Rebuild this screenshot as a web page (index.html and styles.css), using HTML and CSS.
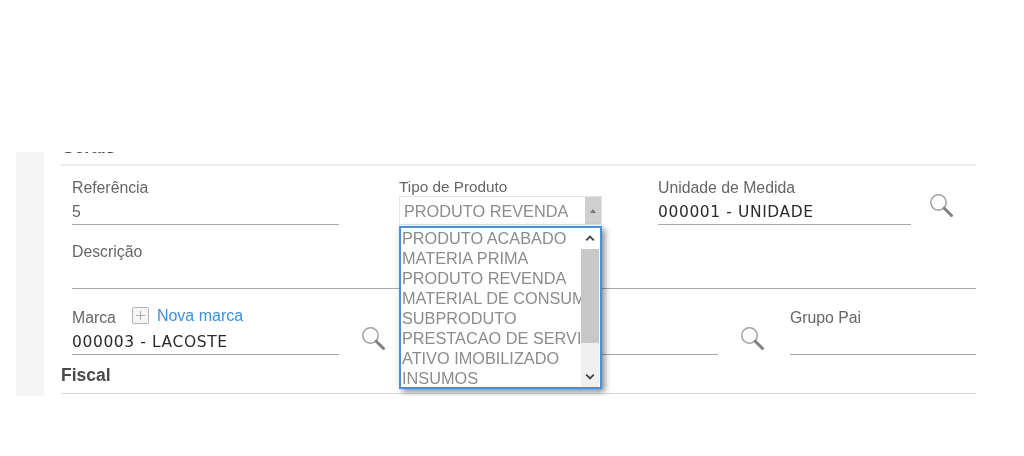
FILE: index.html
```html
<!DOCTYPE html>
<html lang="en">
<head>
    <meta charset="UTF-8">
    <meta name="viewport" content="width=device-width, initial-scale=1.0">
    <title>Cadastro de Produto</title>
    <link rel="stylesheet" href="styles.css">
</head>
<body>
    <svg class="icon-defs" width="0" height="0">
        <symbol id="icon-search" viewBox="0 0 24 24">
            <circle cx="9.5" cy="9.5" r="7.7" fill="none" stroke="#a0a0a0" stroke-width="1.5"/>
            <path d="M15.2 15.2 L22.5 22.5" fill="none" stroke="#808080" stroke-width="3" stroke-linecap="round"/>
        </symbol>
    </svg>

    <div class="panel">
        <div class="panel-strip"></div>
        <div class="panel-body">
            <h2 class="section-title section-general">Gerais</h2>

            <div class="form-row row-first">
                <div class="field field-ref">
                    <label>Referência</label>
                    <div class="field-value plain">5</div>
                </div>
                <div class="field field-type">
                    <label class="small-label">Tipo de Produto</label>
                    <div class="select-closed">
                        <span class="select-text">PRODUTO REVENDA</span>
                        <span class="select-arrow"><i></i></span>
                    </div>
                    <div class="select-list">
                        <ul>
                            <li>PRODUTO ACABADO</li>
                            <li>MATERIA PRIMA</li>
                            <li>PRODUTO REVENDA</li>
                            <li>MATERIAL DE CONSUMO</li>
                            <li>SUBPRODUTO</li>
                            <li>PRESTACAO DE SERVICO</li>
                            <li>ATIVO IMOBILIZADO</li>
                            <li>INSUMOS</li>
                        </ul>
                        <div class="scrollbar">
                            <svg class="scroll-btn" viewBox="0 0 18 22"><path d="M5 13 L9 9 L13 13" fill="none" stroke="#444" stroke-width="2"/></svg>
                            <div class="scroll-thumb"></div>
                            <svg class="scroll-btn scroll-btn-down" viewBox="0 0 18 22"><path d="M5 9 L9 13 L13 9" fill="none" stroke="#444" stroke-width="2"/></svg>
                        </div>
                    </div>
                </div>
                <div class="field field-unit">
                    <label>Unidade de Medida</label>
                    <div class="field-value code">000001 - UNIDADE</div>
                </div>
                <svg class="search-icon search-unit"><use href="#icon-search"/></svg>
            </div>

            <div class="form-row row-desc">
                <div class="field field-desc">
                    <label>Descrição</label>
                    <div class="field-value plain"></div>
                </div>
            </div>

            <div class="form-row row-brand">
                <div class="field field-ref">
                    <div class="brand-label">
                        <label>Marca</label>
                        <span class="plus-box"></span>
                        <a class="new-link">Nova marca</a>
                    </div>
                    <div class="field-value code">000003 - LACOSTE</div>
                </div>
                <svg class="search-icon search-brand"><use href="#icon-search"/></svg>
                <div class="field field-group">
                    <label></label>
                    <div class="field-value plain"></div>
                </div>
                <svg class="search-icon search-group"><use href="#icon-search"/></svg>
                <div class="field field-parent">
                    <label>Grupo Pai</label>
                    <div class="field-value plain"></div>
                </div>
            </div>

            <h2 class="section-title section-fiscal">Fiscal</h2>
        </div>
    </div>
</body>
</html>
```

FILE: styles.css
```css
:root {
    --label-color: #666;
    --line-color: #a8a8a8;
    --select-text: #8c8c8c;
    --select-blue: #4a90d9;
}

body {
    margin: 0;
    padding: 0;
    background: #fff;
    font-family: "Liberation Sans", Arial, sans-serif;
    color: var(--label-color);
}

.icon-defs {
    display: block;
}

.panel {
    display: flex;
    height: 244px;
    width: 960px;
    margin: 152px 0 0 16px;
    overflow: hidden;
    filter: blur(0.5px);
}

.panel-strip {
    width: 28px;
    flex-shrink: 0;
    background: #f5f5f5;
}

.panel-body {
    flex: 1;
    margin-left: 17px;
}

.section-title {
    margin: 0;
    font-size: 17.5px;
    font-weight: bold;
    color: #4a4a4a;
    border-bottom: 1px solid #e2e2e2;
}

.section-general {
    height: 27px;
    margin-top: -17px;
    padding-top: 2px;
    line-height: 20px;
    border-bottom-width: 2px;
    border-bottom-color: #ececec;
}

.section-fiscal {
    height: 29px;
    line-height: 22px;
    border-bottom-color: #d8d8d8;
}

.form-row {
    display: flex;
    align-items: flex-start;
    padding-left: 11px;
}

.row-first {
    height: 64px;
    padding-top: 12px;
}

.row-desc {
    height: 47px;
}

.row-brand {
    height: 56px;
    padding-top: 19px;
}

.field {
    position: relative;
    flex-shrink: 0;
}

.field label {
    display: block;
    height: 20px;
    line-height: 20px;
    font-size: 15.8px;
}

.field .small-label {
    font-size: 15.3px;
    line-height: 17px;
}

.field-value {
    height: 26px;
    line-height: 28px;
    border-bottom: 1px solid var(--line-color);
    color: #444;
}

.plain {
    font-size: 15.8px;
    color: #666;
}

.code {
    font-family: "DejaVu Sans", Verdana, sans-serif;
    font-size: 15.5px;
    letter-spacing: 0.6px;
    color: #2b2b2b;
    white-space: pre;
}

.field-ref {
    width: 267px;
}

.field-type {
    width: 203px;
    margin-left: 60px;
}

.field-unit {
    width: 253px;
    margin-left: 56px;
}

.field-desc {
    width: 904px;
}

.field-group {
    width: 318px;
    margin-left: 15px;
}

.field-parent {
    width: 186px;
    margin-left: 26px;
}

.brand-label {
    display: flex;
    align-items: center;
    height: 20px;
}

.brand-label label {
    margin-right: 16px;
}

.plus-box {
    position: relative;
    width: 17px;
    height: 17px;
    margin: -6px 8px 0 0;
    box-sizing: border-box;
    border: 1px solid #b5b5b5;
    border-radius: 2px;
    background: #f6f6f6;
}

.plus-box::before,
.plus-box::after {
    content: "";
    position: absolute;
    background: #aaa;
}

.plus-box::before {
    left: 3px;
    right: 3px;
    top: 7px;
    height: 1px;
}

.plus-box::after {
    top: 3px;
    bottom: 3px;
    left: 7px;
    width: 1px;
}

.new-link {
    margin-top: -4px;
    font-size: 16px;
    color: #3a8fdc;
}

.search-icon {
    flex-shrink: 0;
    width: 24px;
    height: 24px;
}

.search-unit {
    margin: 15px 0 0 18px;
}

.search-brand {
    margin: 18px 0 0 22px;
}

.search-group {
    margin: 18px 0 0 22px;
}

/* closed select */
.select-closed {
    display: flex;
    align-items: center;
    justify-content: space-between;
    box-sizing: border-box;
    height: 29px;
    margin-top: -2px;
    padding-left: 4px;
    border: 1px solid #e4e4e4;
    font-size: 16.3px;
    color: var(--select-text);
}

.select-text {
    padding-top: 2px;
}

.select-arrow {
    display: flex;
    align-items: center;
    justify-content: center;
    width: 16px;
    height: 100%;
    background: #cfcfcf;
}

.select-arrow i {
    width: 0;
    height: 0;
    border: 3px solid transparent;
    border-top-width: 0;
    border-bottom: 4px solid #777;
}

/* open list, lies over the fields below */
.select-list {
    position: absolute;
    top: 48px;
    left: 0;
    z-index: 5;
    display: flex;
    box-sizing: border-box;
    width: 203px;
    height: 163px;
    border: 2px solid var(--select-blue);
    background: #fff;
    box-shadow: 3px 3px 6px rgba(0, 0, 0, 0.45);
}

.select-list ul {
    flex: 1;
    min-width: 0;
    margin: 0;
    padding: 0 0 0 1px;
    overflow: hidden;
    list-style: none;
}

.select-list li {
    height: 20px;
    line-height: 20px;
    font-size: 16.3px;
    white-space: nowrap;
    color: var(--select-text);
}

.scrollbar {
    display: flex;
    flex-direction: column;
    flex-shrink: 0;
    width: 18px;
    margin-right: 1px;
    background: #f0f0f0;
}

.scroll-btn {
    display: block;
    width: 18px;
    height: 21px;
    background: #fff;
}

.scroll-btn-down {
    margin-top: auto;
    background: #f0f0f0;
}

.scroll-thumb {
    height: 94px;
    background: #c8c8c8;
}
```
